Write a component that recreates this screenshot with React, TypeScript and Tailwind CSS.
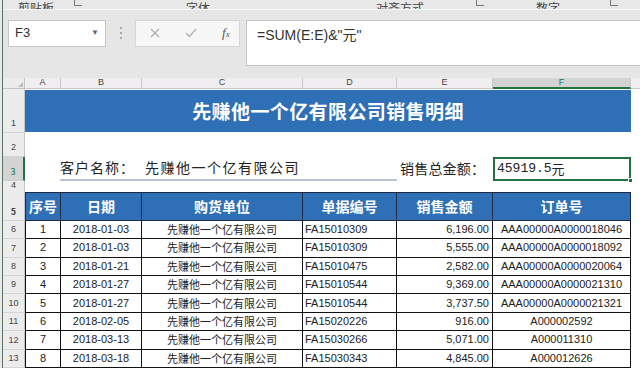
import React from "react";

const COLS = "grid grid-cols-[22px_36px_81px_161px_94px_96px_138px_9px]";
const CJK = "font-['Noto_Sans_CJK_SC',sans-serif]";
const SANS = "font-['Liberation_Sans','Noto_Sans_CJK_SC',sans-serif]";

const rows = [
  ["1", "2018-01-03", "FA15010309", "6,196.00", "AAA00000A0000018046"],
  ["2", "2018-01-03", "FA15010309", "5,555.00", "AAA00000A0000018092"],
  ["3", "2018-01-21", "FA15010475", "2,582.00", "AAA00000A0000020064"],
  ["4", "2018-01-27", "FA15010544", "9,369.00", "AAA00000A0000021310"],
  ["5", "2018-01-27", "FA15010544", "3,737.50", "AAA00000A0000021321"],
  ["6", "2018-02-05", "FA15020226", "916.00", "A000002592"],
  ["7", "2018-03-13", "FA15030266", "5,071.00", "A000011310"],
  ["8", "2018-03-18", "FA15030343", "4,845.00", "A000012626"],
];

function RowHead({ n, active }: { n: string; active?: boolean }) {
  return (
    <div
      className={
        active
          ? "flex items-end justify-center pb-[4px] bg-[#d3d3d3] border-r-2 border-r-[#217346] border-b border-b-[#cfcfcf] text-[9px] text-[#217346] leading-none"
          : "flex items-end justify-center pb-[4px] bg-[#ececec] border-r border-r-[#c4c4c4] border-b border-b-[#d6d6d6] text-[9px] text-[#444] leading-none"
      }
    >
      {n}
    </div>
  );
}

function Launcher() {
  return <span className="inline-block w-[8px] h-[6px] border-l border-b border-[#777]" />;
}

export default function App() {
  return (
    <div className={`w-[640px] h-[368px] overflow-hidden flex bg-[#e6e6e6] ${SANS}`}>
      <div className="w-[2px] h-full bg-[#e9e9e9]" />
      <div className="w-[1px] h-full bg-[#5d6f64]" />
      <div className="w-[637px] flex flex-col">
        {/* ribbon group labels, cut off at the top like in the sheet */}
        <div className="h-[10px] overflow-hidden flex items-end bg-[#e8e8e8] border-b border-[#f6f6f6] text-[12px] text-[#444] leading-none">
          <div className="flex items-end w-full -mb-[5px]">
            <span className={`${CJK} ml-[15px]`}>剪贴板</span>
            <span className="ml-[20px] mb-[6px]"><Launcher /></span>
            <span className={`${CJK} ml-[104px]`}>字体</span>
            <span className={`${CJK} ml-[166px]`}>对齐方式</span>
            <span className="ml-[52px] mb-[6px]"><Launcher /></span>
            <span className={`${CJK} ml-[52px]`}>数字</span>
            <span className="ml-[50px] mb-[6px]"><Launcher /></span>
          </div>
        </div>

        {/* formula bar */}
        <div className="h-[70px] flex items-start pt-[10px]">
          <div className="ml-[5px] w-[98px] h-[27px] bg-white border border-[#c6c6c6] flex items-center justify-between px-[6px]">
            <span className="text-[13px] text-[#333]">F3</span>
            <span className="text-[8px] text-[#666]">▼</span>
          </div>
          <div className="ml-[14px] mt-[7px] flex flex-col gap-[3px]">
            <span className="w-[2px] h-[2px] bg-[#a8a8a8]" />
            <span className="w-[2px] h-[2px] bg-[#a8a8a8]" />
            <span className="w-[2px] h-[2px] bg-[#a8a8a8]" />
          </div>
          <div className="ml-[13px] w-[105px] h-[27px] bg-[#f7f7f7] border border-[#d6d6d6] flex items-center">
            <svg className="ml-[14px]" width="10" height="10" viewBox="0 0 10 10">
              <path d="M1 1L9 9M9 1L1 9" stroke="#b0b0b0" strokeWidth="1.3" />
            </svg>
            <svg className="ml-[25px]" width="12" height="10" viewBox="0 0 12 10">
              <path d="M1 5L4.5 8.5L11 1" stroke="#b0b0b0" strokeWidth="1.3" fill="none" />
            </svg>
            <span className="ml-[25px] text-[13px] italic font-['Liberation_Serif',serif] text-[#555]">
              f<span className="text-[9px]">x</span>
            </span>
          </div>
          <div className="ml-[6px] flex-1 h-[46px] bg-white border border-[#c6c6c6] border-r-0 pl-[10px] pt-[3px] text-[14px] text-[#333]">
            =SUM(E:E)&amp;"<span className={CJK}>元</span>"
          </div>
        </div>

        {/* column headers */}
        <div className={`${COLS} h-[11px] text-[9px] leading-none text-[#444]`}>
          <div className="bg-[#ececec] border-r border-b border-[#c4c4c4] flex items-end justify-end p-[1px]">
            <span className="w-0 h-0 border-l-[5px] border-l-transparent border-b-[5px] border-b-[#bdbdbd]" />
          </div>
          {["A", "B", "C", "D", "E"].map((c) => (
            <div key={c} className="bg-[#f1eef1] border-r border-b border-[#c8c8c8] flex items-center justify-center">
              {c}
            </div>
          ))}
          <div className="bg-[#d3d3d3] border-r border-[#c8c8c8] border-b-2 border-b-[#217346] flex items-center justify-center text-[#217346]">
            F
          </div>
          <div className="bg-[#f1eef1] border-b border-[#c8c8c8]" />
        </div>

        {/* row 1: title */}
        <div className={`${COLS} h-[46px] bg-white`}>
          <RowHead n="1" />
          <div className="col-span-6 my-[1px] bg-[#2f6fb6] flex items-center justify-center">
            <span className={`${CJK} text-white text-[19px] font-bold tracking-[0.4px]`}>
              先赚他一个亿有限公司销售明细
            </span>
          </div>
          <div />
        </div>

        {/* row 2 */}
        <div className={`${COLS} h-[24px] bg-white`}>
          <RowHead n="2" />
          <div className="col-span-7" />
        </div>

        {/* row 3 */}
        <div className={`${COLS} h-[25px] bg-white ${CJK} text-[#222]`}>
          <RowHead n="3" active />
          <div />
          <div className="border-b-2 border-[#b7c5d6] flex items-center text-[14px] tracking-[1px] -ml-[1px]">
            客户名称：
          </div>
          <div className="border-b-2 border-[#b7c5d6] flex items-center pl-[3px] text-[14px] tracking-[1.5px]">
            先赚他一个亿有限公司
          </div>
          <div className="border-b-2 border-[#b7c5d6]" />
          <div className="flex items-center pl-[3px] text-[14px] tracking-[0.2px]">销售总金额：</div>
          <div className="relative border-2 border-[#217346] flex items-center pl-[2px] text-[13px] font-['Liberation_Mono','Noto_Sans_CJK_SC',monospace]">
            45919.5<span className={CJK}>元</span>
            <span className="absolute -right-[4px] -bottom-[4px] w-[5px] h-[5px] bg-[#217346] border border-white" />
          </div>
          <div />
        </div>

        {/* row 4 */}
        <div className={`${COLS} h-[11px] bg-white`}>
          <RowHead n="4" />
          <div className="col-span-7" />
        </div>

        {/* row 5: table header */}
        <div className={`${COLS} h-[30px] bg-white ${CJK} text-white text-[14px] font-bold`}>
          <RowHead n="5" />
          {["序号", "日期", "购货单位", "单据编号", "销售金额", "订单号"].map((h, i) => (
            <div
              key={h}
              className={
                i === 0
                  ? "bg-[#2f6fb6] border border-[#1c2c44] flex items-center justify-center"
                  : "bg-[#2f6fb6] border-y border-r border-[#1c2c44] flex items-center justify-center"
              }
            >
              {h}
            </div>
          ))}
          <div />
        </div>

        {/* data rows */}
        {rows.map((r, i) => (
          <div key={i} className={`${COLS} h-[19px] bg-white text-[11px] text-[#222] leading-none`}>
            <RowHead n={String(i + 6)} />
            <div className="border-l border-r border-b border-[#111] flex items-center justify-center">{r[0]}</div>
            <div className="border-r border-b border-[#111] flex items-center justify-center">{r[1]}</div>
            <div className={`border-r border-b border-[#111] flex items-center justify-center ${CJK}`}>
              先赚他一个亿有限公司
            </div>
            <div className="border-r border-b border-[#111] flex items-center pl-[2px]">{r[2]}</div>
            <div className="border-r border-b border-[#111] flex items-center justify-end pr-[3px]">{r[3]}</div>
            <div className="border-r border-b border-[#111] flex items-center justify-center">{r[4]}</div>
            <div />
          </div>
        ))}
      </div>
    </div>
  );
}
